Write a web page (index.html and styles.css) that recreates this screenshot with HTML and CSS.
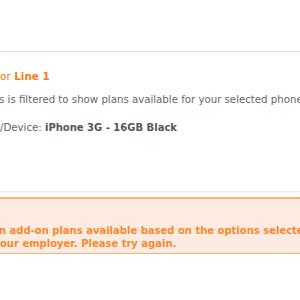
FILE: index.html
```html
<!DOCTYPE html>
<html>
<head>
<meta charset="utf-8">
<link rel="stylesheet" href="styles.css">
</head>
<body>
<div class="page">
  <div class="header"></div>
  <div class="content">
    <h2 class="title">or <strong>Line 1</strong></h2>
    <p class="note">s is filtered to show plans available for your selected phone/device.</p>
    <p class="device">/Device: <strong>iPhone 3G - 16GB Black</strong></p>
  </div>
  <div class="error">
    <p class="error-line">n add-on plans available based on the options selected by</p>
    <p class="error-line">our employer. Please try again.</p>
  </div>
</div>
</body>
</html>
```
FILE: styles.css
```css
html, body {
  margin: 0;
  padding: 0;
  background: #fff;
}
body {
  font-family: "DejaVu Sans", Verdana, sans-serif;
  font-size: 10.2px;
  line-height: 13px;
  color: #666;
  overflow: hidden;
  width: 300px;
  height: 300px;
}
.page {
  width: 300px;
}
.header {
  height: 51px;
  border-bottom: 1px solid #dcdcdc;
}
.content {
  padding: 18px 0 0 0;
  height: 121px;
  border-bottom: 1px solid #ececec;
  box-shadow: 0 1px 2px #f2f2f2;
}
.title {
  margin: 0;
  font-size: 10.6px;
  font-weight: normal;
  color: #f47d20;
  white-space: nowrap;
}
.title strong {
  font-size: 10.4px;
  font-weight: bold;
}
.note {
  margin: 10px 0 0 -1px;
  white-space: nowrap;
}
.device {
  margin: 15px 0 0 0;
  white-space: nowrap;
}
.device strong {
  font-size: 10px;
  color: #555;
}
.error {
  margin-top: 5px;
  background: #fdebe1;
  border-top: 2px solid #f9b27a;
  border-bottom: 1px solid #f9b27a;
  padding: 25px 0 3px 0;
}
.error-line {
  margin: 0;
  font-size: 10px;
  font-weight: bold;
  color: #f48a2c;
  white-space: nowrap;
}
.error-line:first-child {
  margin-left: -1px;
}
```
